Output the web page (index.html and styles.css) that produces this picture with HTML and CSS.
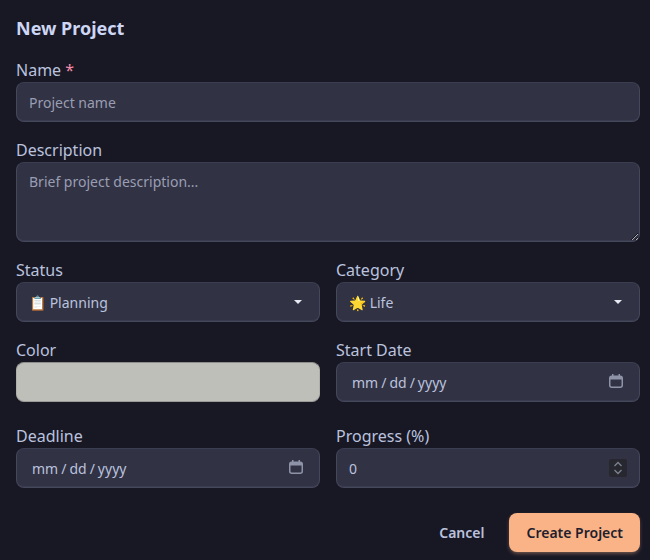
FILE: index.html
```html
<!DOCTYPE html>
<html lang="en">
<head>
<meta charset="utf-8">
<title>New Project</title>
<link rel="stylesheet" href="styles.css">
</head>
<body>
<form class="form">
  <h2 class="title">New Project</h2>
  <div class="group">
    <label class="label">Name <span class="req">*</span></label>
    <input class="field" type="text" placeholder="Project name">
  </div>
  <div class="group">
    <label class="label">Description</label>
    <textarea class="field area" placeholder="Brief project description..."></textarea>
  </div>
  <div class="row">
    <div class="group">
      <label class="label">Status</label>
      <select class="field select"><option>📋 Planning</option></select>
    </div>
    <div class="group">
      <label class="label">Category</label>
      <select class="field select"><option>🌟 Life</option></select>
    </div>
  </div>
  <div class="row tall">
    <div class="group">
      <label class="label">Color</label>
      <div class="swatch"></div>
    </div>
    <div class="group">
      <label class="label">Start Date</label>
      <input class="field date" type="date">
    </div>
  </div>
  <div class="row">
    <div class="group">
      <label class="label">Deadline</label>
      <input class="field date" type="date">
    </div>
    <div class="group">
      <label class="label">Progress (%)</label>
      <input class="field number" type="number" value="0">
    </div>
  </div>
  <div class="actions">
    <button class="btn cancel" type="button">Cancel</button>
    <button class="btn create" type="button">Create Project</button>
  </div>
</form>
</body>
</html>
```
FILE: styles.css
```css
* { box-sizing: border-box; }
html { color-scheme: dark; }
body {
  margin: 0;
  background: #181825;
  font-family: "Noto Sans", sans-serif;
  color: #cdd6f4;
  overflow: hidden;
}
.form { padding: 16px 10px 16px 16px; }
.title {
  margin: 0 0 19px;
  font-size: 18px;
  line-height: 25px;
  font-weight: 700;
}
.group { margin-bottom: 18px; min-width: 0; }
.label {
  display: block;
  font-size: 16px;
  line-height: 20px;
  margin-bottom: 2px;
  color: #bac2de;
}
.req { color: #f38ba8; }
.field {
  display: block;
  width: 100%;
  height: 40px;
  padding: 0 12px;
  background-color: #313244;
  border: 1px solid #45475a;
  border-top-color: #3b3d50;
  border-radius: 8px;
  box-shadow: inset 0 -1px 0 rgba(69, 71, 90, 0.45);
  color: #bac2de;
  font-family: inherit;
  font-size: 14px;
  outline: none;
}
.field::placeholder { color: #9a9eb2; }
.area { height: 80px; padding: 9px 12px; resize: vertical; }
.select {
  appearance: none;
  background-image: url("data:image/svg+xml,%3Csvg xmlns='http://www.w3.org/2000/svg' width='8' height='4'%3E%3Cpath d='M0 0h8L4 4z' fill='%23e6e9f2'/%3E%3C/svg%3E");
  background-repeat: no-repeat;
  background-position: right 17px center;
}
.date { padding: 0 16px 0 14px; }
.date::-webkit-datetime-edit-text { padding: 0 2px; }
.date::-webkit-calendar-picker-indicator {
  width: 14px;
  height: 14px;
  margin: 0 0 2px;
  padding: 0;
  background: url("data:image/svg+xml,%3Csvg xmlns='http://www.w3.org/2000/svg' width='14' height='14'%3E%3Crect x='.75' y='2.250' width='12.500' height='11' rx='2' fill='none' stroke='%238f93a8' stroke-width='1.500'/%3E%3Cpath d='M1 3h12v2.500H1z' fill='%238f93a8'/%3E%3Cpath d='M3.750 0v3M10.250 0v3' stroke='%238f93a8' stroke-width='1.500'/%3E%3C/svg%3E") no-repeat center;
}
.number::-webkit-inner-spin-button {
  -webkit-appearance: none;
  opacity: 1;
  width: 18px;
  height: 18px;
  margin: 0;
  background: #27282f url("data:image/svg+xml,%3Csvg xmlns='http://www.w3.org/2000/svg' width='18' height='18'%3E%3Cpath d='M5.500 7 9 3.500 12.500 7M5.500 11 9 14.500 12.500 11' fill='none' stroke='%237d808f' stroke-width='1.300'/%3E%3C/svg%3E") no-repeat center;
  border-radius: 2px;
}
.swatch {
  height: 40px;
  background: #bfbfba;
  border: 1px solid #b0b0ab;
  border-top-color: #8d8d8a;
  border-bottom-color: #9a9a96;
  border-radius: 8px;
}
.row {
  display: grid;
  grid-template-columns: 1fr 1fr;
  gap: 16px;
}
.tall .group { margin-bottom: 24px; }
.actions {
  display: flex;
  justify-content: flex-end;
  align-items: center;
  gap: 8px;
  margin-top: 7px;
}
.btn {
  height: 39px;
  padding: 0 17px;
  border: 0;
  border-radius: 8px;
  font-family: inherit;
  font-size: 14px;
  font-weight: 600;
}
.cancel { background: transparent; color: #bac2de; }
.create {
  background: #fab387;
  color: #1e1e2e;
  box-shadow: 0 2px 4px -1px rgba(250, 179, 135, 0.5);
}
```
